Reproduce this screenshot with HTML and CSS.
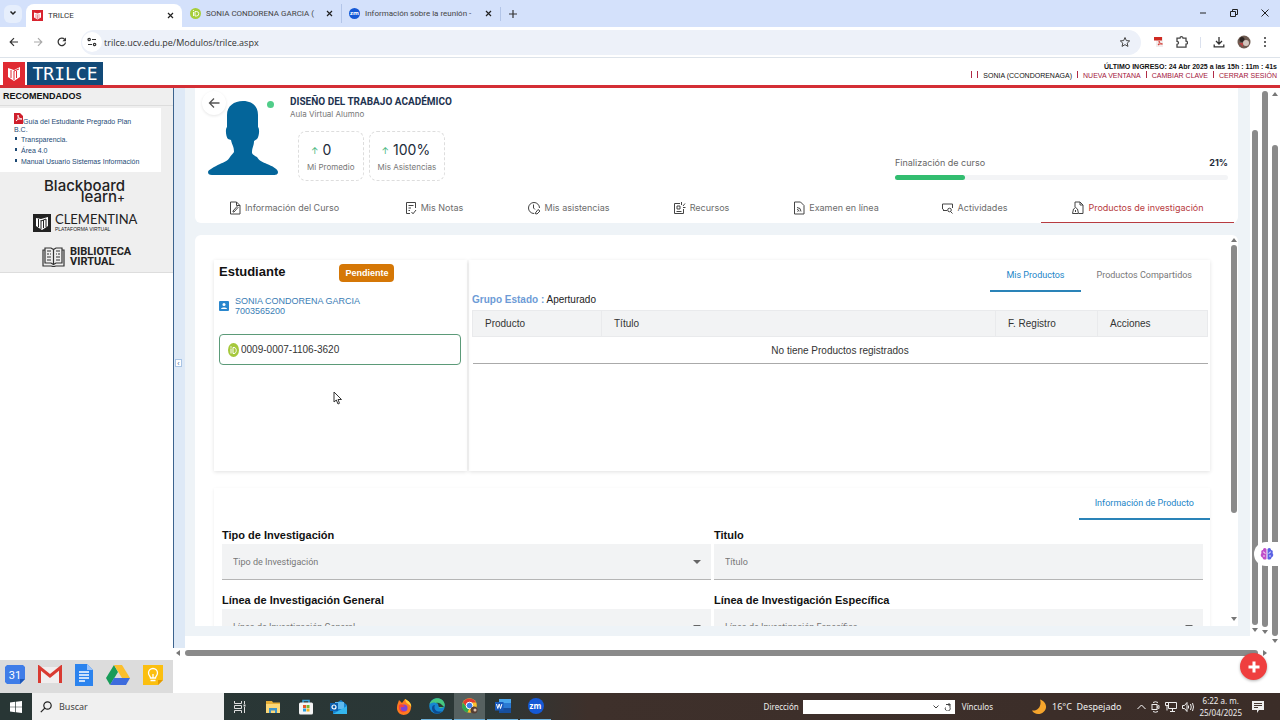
FILE: index.html
```html
<!DOCTYPE html>
<html lang="es">
<head>
  <meta charset="UTF-8">
  <meta name="viewport" content="width=device-width, initial-scale=1.0">
  <title>TRILCE</title>
  <link rel="stylesheet" href="styles.css">
</head>
<body>
  <!-- Pestañas del navegador -->
  <div class="tabstrip">
    <button class="tab-search" aria-label="Buscar pestañas"><svg width="8" height="8" viewBox="0 0 8 8"><path d="M1.500 2.500 4 5l2.500-2.500" fill="none" stroke="#222" stroke-width="1.500"/></svg></button>
    <div class="btab active">
      <svg width="11" height="11" viewBox="0 0 22 22"><rect width="22" height="22" fill="#d8232e"/><path d="M4 5l7 2 7-2v10l-7 4-7-4z" fill="#fff"/><path d="M8 8v9M11 9v9M14 8v9" stroke="#d8232e"/></svg>
      <span class="btab-title">TRILCE</span>
      <button class="close" aria-label="Cerrar"><svg width="7" height="7" viewBox="0 0 7 7"><path d="M1 1l5 5M6 1 1 6" stroke="#222" stroke-width="1.200"/></svg></button>
    </div>
    <div class="btab second">
      <svg width="11" height="11" viewBox="0 0 22 22"><circle cx="11" cy="11" r="11" fill="#a6ce39"/><path d="M7 8v8M10 7v9h3a4.500 4.500 0 0 0 0-9z" fill="none" stroke="#fff" stroke-width="1.800"/><circle cx="7" cy="5" r="1.200" fill="#fff"/></svg>
      <span class="btab-title">SONIA CONDORENA GARCIA (</span>
      <button class="close" aria-label="Cerrar"><svg width="7" height="7" viewBox="0 0 7 7"><path d="M1 1l5 5M6 1 1 6" stroke="#222" stroke-width="1.200"/></svg></button>
    </div>
    <div class="btab third">
      <span class="zm">zm</span>
      <span class="btab-title">Información sobre la reunión -</span>
      <button class="close" aria-label="Cerrar"><svg width="7" height="7" viewBox="0 0 7 7"><path d="M1 1l5 5M6 1 1 6" stroke="#222" stroke-width="1.200"/></svg></button>
    </div>
    <button class="new-tab" aria-label="Nueva pestaña"><svg width="8" height="8" viewBox="0 0 8 8"><path d="M4 0v8M0 4h8" stroke="#333" stroke-width="1.200"/></svg></button>
    <div class="win-buttons">
      <button aria-label="Minimizar"><svg width="8" height="8" viewBox="0 0 8 8"><path d="M1 4h6" stroke="#222"/></svg></button>
      <button aria-label="Restaurar"><svg width="8" height="8" viewBox="0 0 8 8"><path d="M.5 2.500h5v5h-5zM2.500 2V.5h5v5H6" fill="none" stroke="#222"/></svg></button>
      <button aria-label="Cerrar ventana"><svg width="8" height="8" viewBox="0 0 8 8"><path d="M.5.5l7 7m0-7-7 7" stroke="#222"/></svg></button>
    </div>
  </div>

  <div class="toolbar">
    <button aria-label="Atrás"><svg width="10" height="10" viewBox="0 0 10 10"><path d="M9 5H1.500M5 1.200 1.200 5 5 8.800" fill="none" stroke="#333" stroke-width="1.200"/></svg></button>
    <button aria-label="Adelante"><svg width="10" height="10" viewBox="0 0 10 10"><path d="M1 5h7.500M5 1.200 8.800 5 5 8.800" fill="none" stroke="#aaa" stroke-width="1.200"/></svg></button>
    <button aria-label="Recargar"><svg width="10" height="10" viewBox="0 0 10 10"><path d="M8.500 5.500A3.700 3.700 0 1 1 7.600 2.400" fill="none" stroke="#333" stroke-width="1.300"/><path d="M9 .6v3.600H5.400z" fill="#333"/></svg></button>
    <div class="address">
      <span class="site-info"><svg width="10" height="10" viewBox="0 0 10 10" fill="none" stroke="#333" stroke-width="1.200"><circle cx="2.200" cy="2.500" r="1.200"/><path d="M5 2.500h4M1 7.500h4"/><circle cx="7.600" cy="7.500" r="1.200"/></svg></span>
      <input type="text" aria-label="Dirección web" value="trilce.ucv.edu.pe/Modulos/trilce.aspx">
      <svg width="12" height="12" viewBox="0 0 24 24"><path d="M12 3l2.700 6.200 6.700.6-5 4.400 1.500 6.600-5.900-3.500-5.900 3.500 1.500-6.600-5-4.400 6.700-.6z" fill="none" stroke="#444" stroke-width="2"/></svg>
    </div>
    <div class="extensions">
      <svg width="10" height="12" viewBox="0 0 10 12"><path d="M2 1h7v10H2z" fill="#f3eded"/><path d="M0 1h8v3.500H0z" fill="#cf2a22"/><path d="M4 9c2-2 1-4 1-4s1 3 3 3-2-.5-4 1z" fill="none" stroke="#cf2a22" stroke-width=".8"/></svg>
      <svg width="12" height="12" viewBox="0 0 12 12"><path d="M1 2.200h3a1.500 1.500 0 0 1 3 0h3v3a1.500 1.500 0 0 1 0 3v3H1V8.300a1.500 1.500 0 0 0 0-3z" fill="none" stroke="#444" stroke-width="1.300"/></svg>
      <span class="vline"></span>
      <svg width="12" height="12" viewBox="0 0 12 12"><path d="M6 1v6.500M3 5l3 3 3-3M1.200 8.500v2.300h9.600V8.500" fill="none" stroke="#333" stroke-width="1.300"/></svg>
      <svg width="14" height="14" viewBox="0 0 14 14"><circle cx="7" cy="7" r="6.500" fill="#6d5a50"/><circle cx="5" cy="4.500" r="2.500" fill="#2c2523"/><circle cx="9" cy="8" r="3" fill="#d4c5bd"/><path d="M2 8h4v4z" fill="#b44"/></svg>
      <svg width="4" height="12" viewBox="0 0 4 12" fill="#333"><circle cx="2" cy="2" r="1"/><circle cx="2" cy="6" r="1"/><circle cx="2" cy="10" r="1"/></svg>
    </div>
  </div>

  <!-- Cabecera TRILCE -->
  <header class="site-header">
    <div class="brand">
      <svg width="22" height="23" viewBox="0 0 22 23"><rect width="22" height="23" fill="#e02a32"/><path d="M5 6l6 2 6-3v10l-6 4-6-4z" fill="#fff"/><path d="M8 8v8M11 9v9M11 9l5-2M13.500 9v7" stroke="#e02a32"/></svg>
      <span class="brand-name">TRILCE</span>
    </div>
    <div class="session">
      <div class="last-login">ÚLTIMO INGRESO: 24 Abr 2025 a las 15h : 11m : 41s</div>
      <nav class="session-links">
        <i></i><i></i><span>SONIA (CCONDORENAGA)</span>
        <i></i><a href="#">NUEVA VENTANA</a>
        <i></i><a href="#">CAMBIAR CLAVE</a>
        <i></i><a href="#">CERRAR SESIÓN</a>
      </nav>
    </div>
  </header>

  <div class="workspace">
    <aside class="sidebar">
      <div class="side-top">
        <h2>RECOMENDADOS</h2>
        <ul class="side-links">
          <li class="doc"><svg width="9" height="11" viewBox="0 0 9 11"><path d="M0 0h6l3 3v8H0z" fill="#cf1f2c"/><path d="M2 8c3-2 2-5 2-6 0 2 1 4 4 4-3 0-5 0-6 2z" fill="none" stroke="#fff" stroke-width=".9"/></svg><a href="#">Guía del Estudiante Pregrado Plan B.C.</a></li>
          <li><a href="#">Transparencia.</a></li>
          <li><a href="#">Área 4.0</a></li>
          <li><a href="#">Manual Usuario Sistemas Información</a></li>
        </ul>
        <a class="logo blackboard" href="#"><span>Blackboard</span><span>learn<span class="plus">+</span></span></a>
        <a class="logo clementina" href="#">
          <svg width="18" height="18" viewBox="0 0 18 18"><rect width="18" height="18" fill="#222"/><path d="M3 4l5 1 7-2v9l-6 4-6-4z" fill="#fff"/><path d="M5.500 5v8M8 6v9M8 7l5-2v8M10.500 6v8" fill="none" stroke="#222"/></svg>
          <span><b>CLEMENTINA</b><small>PLATAFORMA VIRTUAL</small></span>
        </a>
        <a class="logo biblioteca" href="#">
          <svg width="23" height="20" viewBox="0 0 23 20" fill="none" stroke="#333" stroke-width="1.200"><path d="M3 1h6l2.500 1.500L14 1h6v15h-6l-2.500 1.500L9 16H3zM11.500 3v14M3 3H1v16h8l2.500.6L14 19h8V3h-2"/><path d="M5 4h4M5 7h2M8 7h1M5 10h4M5 13h4M14 4h4M14 7h1M16 7h2M14 10h4M14 13h4"/></svg>
          <span>BIBLIOTECA<br>VIRTUAL</span>
        </a>
      </div>
      <div class="apps">
        <svg width="20" height="20" viewBox="0 0 20 20"><path d="M2 0h16l2 2v12l-5 5H2l-2-2V2z" fill="#3f7de8"/><path d="M15 14h5l-5 5z" fill="#1b56b8"/><text x="10" y="14" text-anchor="middle" class="cal">31</text></svg>
        <svg width="24" height="20" viewBox="0 0 24 20"><path d="M2 2h20v16H2z" fill="#f1eeee"/><path d="M1.500 18V2.500L12 11 22.500 2.500V18" fill="none" stroke="#d93a31" stroke-width="3"/></svg>
        <svg width="18" height="22" viewBox="0 0 18 22"><path d="M0 0h12l6 6v16H0z" fill="#2b83ee"/><path d="M12 0v6h6z" fill="#9cc4fa"/><path d="M4 8h10M4 11h10M4 14h10M4 17h6" stroke="#fff" stroke-width="1.300"/></svg>
        <svg width="24" height="20" viewBox="0 0 24 20"><path d="M8 0 0 13l4 7L12 7z" fill="#169b58"/><path d="M8 0h8l8 13h-8z" fill="#fbbf2d"/><path d="M8 13h16l-4 7H4z" fill="#3d6bdd"/></svg>
        <svg width="20" height="20" viewBox="0 0 20 20"><path d="M0 0h20v15l-5 5H0z" fill="#fbbf10"/><path d="M15 15h5l-5 5z" fill="#e49a00"/><path d="M7.500 13c0-2-2-2.500-2-5a4.500 4.500 0 0 1 9 0c0 2.500-2 3-2 5zM7.500 15.500h5M10 13V9" fill="none" stroke="#fff" stroke-width="1.300"/></svg>
      </div>
    </aside>

    <div class="content">
      <div class="content-top">
        <div class="splitter"><button aria-label="Contraer">‹</button></div>
        <div class="course">
          <section class="course-card">
            <div class="course-info">
              <div class="avatar">
                <svg width="72" height="76" viewBox="0 0 72 76"><path d="M20 16C20 7 27 2 36 2s15 5 15 14v12c2 2 1 10-1 12l-3 2c0 5-2 6-2 12 1 2 3 3 5 4 2 4 6 5 10 7 5 2 11 5 11 8s-3 3-5 3H5c-3 0-4-1-4-3s6-5 12-8c4-2 8-3 10-7 1-2 3-3 4-5 0-6-2-7-3-12l-3-1c-2-2-3-10-1-12z" fill="#04659a"/></svg>
                <span class="online"></span>
                <button class="back" aria-label="Volver"><svg width="12" height="12" viewBox="0 0 12 12"><path d="M11.500 6h-10M6 1.500 1.500 6 6 10.500" fill="none" stroke="#555" stroke-width="1.300"/></svg></button>
              </div>
              <div class="course-text">
                <h1>DISEÑO DEL TRABAJO ACADÉMICO</h1>
                <p>Aula Virtual Alumno</p>
                <div class="stats">
                  <div class="stat"><strong><i>↑</i>0</strong><span>Mi Promedio</span></div>
                  <div class="stat"><strong><i>↑</i>100%</strong><span>Mis Asistencias</span></div>
                </div>
              </div>
              <div class="progress">
                <div class="progress-text"><span>Finalización de curso</span><b>21%</b></div>
                <div class="bar"><div style="width: 21%"></div></div>
              </div>
            </div>
            <nav class="course-tabs">
              <a href="#"><svg width="12" height="14" viewBox="0 0 12 14"><path d="M1.500 1h6L11 4.500V13H1.500zM7.500 1v3.500H11M4 10l4-4.500 1 1L5 11H4z"/></svg>Información del Curso</a>
              <a href="#"><svg width="12" height="14" viewBox="0 0 12 14"><path d="M10.500 7V1.500h-9v11H5M3.500 4.500h5M3.500 7h2.500M3.500 9.500H5M6.500 11l1.500 1.800L11 9"/></svg>Mis Notas</a>
              <a href="#"><svg width="14" height="14" viewBox="0 0 14 14"><path d="M7 12.500A5.500 5.500 0 1 1 12.500 7M6.500 3.500V7l1.500 1.500M8 12.500l3-4 2 1.500-3 3z"/></svg>Mis asistencias</a>
              <a href="#"><svg width="13" height="14" viewBox="0 0 13 14"><path d="M7 2.500H1.500v10h9V8M4 5h3v3H4zM3.500 10.500h5M8.500 4V1M10 5l2-2.500M10 6.500h2.500"/></svg>Recursos</a>
              <a href="#"><svg width="12" height="14" viewBox="0 0 12 14"><path d="M1.500 1h6L11 4.500V13H1.500zM4 6.500a4 4 0 0 1 4 4M4 8.500a2 2 0 0 1 2 2M4 10.500h.5"/></svg>Examen en línea</a>
              <a href="#"><svg width="13" height="12" viewBox="0 0 13 12"><path d="M6 8.500H3.500L1.500 7V2h10v4M11.500 11.500l-2-2M2 8.500h4"/><circle cx="8.500" cy="8" r="1.800"/></svg>Actividades</a>
              <a href="#" class="current"><svg width="13" height="14" viewBox="0 0 13 14"><path d="M4 6V1h5l3 3v8.500H8M9 1v3h3M1.500 12.500l1-4.500 2-1.500 2 1.500 1 4.500zM4.500 9v2"/></svg>Productos de investigación</a>
            </nav>
          </section>

          <section class="products">
            <div class="products-scroll">
              <div class="panels">
                <div class="student">
                  <div class="student-head"><h3>Estudiante</h3><span class="badge">Pendiente</span></div>
                  <div class="person">
                    <svg width="10" height="10" viewBox="0 0 10 10"><rect width="10" height="10" rx="1" fill="#2a87cd"/><circle cx="5" cy="3.500" r="1.500" fill="#fff"/><path d="M2 8c0-2 6-2 6 0z" fill="#fff"/></svg>
                    <a href="#">SONIA CONDORENA GARCIA<br>7003565200</a>
                  </div>
                  <div class="orcid">
                    <svg width="11" height="14" viewBox="0 0 11 14"><ellipse cx="5.500" cy="7" rx="5.500" ry="7" fill="#a6c83c"/><path d="M3 5.500v5M5 4.500v6h1c3 0 3-6 0-6z" fill="none" stroke="#fff"/><circle cx="3" cy="4" r=".7" fill="#fff"/></svg>
                    <input type="text" aria-label="ORCID" value="0009-0007-1106-3620">
                  </div>
                </div>
                <div class="list">
                  <div class="mat-tabs">
                    <button class="selected">Mis Productos</button>
                    <button>Productos Compartidos</button>
                  </div>
                  <p class="group"><b>Grupo Estado :</b> Aperturado</p>
                  <table>
                    <thead>
                      <tr><th class="c-prod">Producto</th><th>Título</th><th class="c-date">F. Registro</th><th class="c-act">Acciones</th></tr>
                    </thead>
                    <tbody>
                      <tr><td colspan="4">No tiene Productos registrados</td></tr>
                    </tbody>
                  </table>
                </div>
              </div>

              <div class="info-box">
                <div class="mat-tabs">
                  <button class="selected">Información de Producto</button>
                </div>
                <form class="product-form">
                  <div class="field">
                    <label for="tipo">Tipo de Investigación</label>
                    <select id="tipo"><option>Tipo de Investigación</option></select>
                  </div>
                  <div class="field">
                    <label for="titulo">Titulo</label>
                    <input type="text" id="titulo" placeholder="Título">
                  </div>
                  <div class="field">
                    <label for="general">Línea de Investigación General</label>
                    <select id="general"><option>Línea de Investigación General</option></select>
                  </div>
                  <div class="field">
                    <label for="especifica">Línea de Investigación Específica</label>
                    <select id="especifica"><option>Línea de Investigación Específica</option></select>
                  </div>
                </form>
              </div>
            </div>
            <div class="vscroll inner"><i class="up"></i><span class="thumb"></span><i class="down"></i></div>
          </section>
        </div>
        <div class="vscroll first"><span class="thumb"></span><i class="down"></i></div>
        <div class="vscroll second-bar"><span class="thumb"></span><i class="down"></i></div>
        <div class="vscroll third-bar"><i class="up"></i><span class="thumb"></span><i class="down"></i></div>
      </div>
      <div class="hscroll"><i class="left"></i><span class="thumb"></span><i class="right"></i></div>
    </div>

    <svg class="cursor" width="10" height="14" viewBox="0 0 10 14"><path d="M1 1v10l2.300-2 1.700 4 1.500-.7L5 8.500h3.500z" fill="#fff" stroke="#333"/></svg>
    <button class="assistant" aria-label="Asistente"><svg width="14" height="14" viewBox="0 0 14 14"><path d="M6.500 2C5 0 3 1 3 3 1 3 1 5 1.500 6 0 8 1 10 2.500 10.500 3 13 5.500 13 6.500 12z" fill="#c04fc8"/><path d="M7.500 2C9 0 11 1 11 3c2 0 2 2 1.500 3 1.500 2 .5 4-1 4.500C11 13 8.500 13 7.500 12z" fill="#5b62e4"/><path d="M3 5c2 0 2 1 2 2M3 9h2M11 5c-2 0-2 1-2 2M11 9H9" fill="none" stroke="#fff" stroke-width=".8"/></svg></button>
    <button class="fab" aria-label="Agregar"><svg width="12" height="12" viewBox="0 0 12 12"><path d="M6 .5v11M.5 6h11" stroke="#fff" stroke-width="3"/></svg></button>
  </div>

  <!-- Barra de tareas -->
  <footer class="taskbar">
    <button class="start" aria-label="Inicio"><svg width="12" height="12" viewBox="0 0 12 12" fill="#fff"><path d="M0 1.500 5.300.8v4.900H0zM6 .7 12 0v5.700H6zM0 6.300h5.300v4.900L0 10.500zM6 6.300h6V12l-6-.7z"/></svg></button>
    <label class="search"><svg width="12" height="12" viewBox="0 0 12 12" fill="none" stroke="#222" stroke-width="1.200"><circle cx="7.500" cy="4.500" r="3.700"/><path d="M4.800 7.200.8 11.200"/></svg><input type="text" aria-label="Buscar" placeholder="Buscar"></label>
    <div class="task-apps">
      <button aria-label="Vista de tareas"><svg width="12" height="12" viewBox="0 0 12 12" fill="none" stroke="#ddd"><path d="M.5 0v2.500h7V0M.5 4.500h7v3h-7zM.5 12V9.500h7V12M10.500 0v3M10.500 6v6"/><path d="M9.500 4.500h2" stroke-width="2"/></svg></button>
      <button aria-label="Explorador"><svg width="16" height="14" viewBox="0 0 16 14"><path d="M1 1h6l1 1.500h7V13H1z" fill="#e6ad36"/><path d="M1 4h14v9H1z" fill="#fbd777"/><path d="M4 13V8h8v5h-2v-2.500H6V13z" fill="#3f94c9"/></svg></button>
      <button aria-label="Store"><svg width="16" height="16" viewBox="0 0 16 16"><path d="M5 4V1.500h6V4" fill="none" stroke="#3ba5dc" stroke-width="1.500"/><rect x="1" y="3.500" width="14" height="12" rx="1.500" fill="#f4f4f4"/><path d="M5 6h3v3H5z" fill="#e4572c"/><path d="M8.500 6h3v3h-3z" fill="#77b52f"/><path d="M5 9.500h3v3H5z" fill="#279fe0"/><path d="M8.500 9.500h3v3h-3z" fill="#f4b41f"/></svg></button>
      <button aria-label="Outlook"><svg width="17" height="16" viewBox="0 0 17 16"><path d="M3 6 11 1l6 5v9H3z" fill="#1683cf"/><path d="M5 3h9v7H5z" fill="#5fb9ee"/><path d="M3 15l14-8v8z" fill="#35b7ef"/><path d="M0 4h8v8H0z" fill="#0c5fae"/><circle cx="4" cy="8" r="2" fill="none" stroke="#fff" stroke-width="1.200"/></svg></button>
      <button class="gap" aria-label="Firefox"><svg width="16" height="16" viewBox="0 0 16 16"><path d="M2 4l1-3 3 3 3-4c4 2 7 5 6 9-1 9-13 9-14 1 0-2 0-4 1-6z" fill="#ff7a1f"/><path d="M9 0c4 2 7 5 6 8-1-3-4-3-5-5S9 0 9 0z" fill="#ffd13a"/><circle cx="8" cy="9" r="3.500" fill="#7b45d8"/><path d="M3 6c3-2 4 1 7 1-2 0-3 2-6 1 0 3 3 5 6 4-4 3-8 0-7-6z" fill="#f5413f"/></svg></button>
      <button class="open" aria-label="Edge"><svg width="16" height="16" viewBox="0 0 16 16"><circle cx="8" cy="8" r="7.800" fill="#1687d0"/><path d="M.4 7C2-2 15-2 15.800 7c0 3-5 4-6 2 1-1 0-4-3-4C4 4 1 5 .4 7z" fill="#46c980"/><path d="M6 7c-2 4 2 8 7 6-4 5-10 2-10-3 0-2 1-3 3-3z" fill="#0c4c94"/><path d="M10 9c-1-1 0-4-3-4 2-1 5 0 8 4z" fill="#2b3736"/></svg></button>
      <button class="open focus" aria-label="Chrome"><svg width="16" height="16" viewBox="0 0 16 16"><circle cx="7.500" cy="7.500" r="7.300" fill="#fbc02d"/><path d="M1 4.500A7.300 7.300 0 0 1 14 4.500H7.500L4.500 9z" fill="#e23c32"/><path d="M1 4.500 5 10l2 1-1.500 3.600C0 13-1 8 1 4.500z" fill="#30a552"/><circle cx="7.500" cy="7.500" r="3.300" fill="#3d7de8" stroke="#fff"/><circle cx="12" cy="12" r="3.500" fill="#563e35"/><circle cx="13" cy="12" r="1.500" fill="#dfc4b2"/></svg></button>
      <button class="open" aria-label="Word"><svg width="16" height="14" viewBox="0 0 16 14"><path d="M4 0h12v14H4z" fill="#2a7ad3"/><path d="M4 0h12v4H4z" fill="#49a7ed"/><path d="M4 9h12v5H4z" fill="#174f9d"/><path d="M0 3h8.500v8.500H0z" fill="#185abd"/><path d="M1.500 5l1.300 4.500L4.200 5l1.300 4.500L6.900 5" fill="none" stroke="#fff"/></svg></button>
      <button class="open" aria-label="Zoom"><span class="zm big">zm</span></button>
    </div>
    <div class="tray">
      <label class="direccion">Dirección <span class="combo"><input type="text"><svg width="6" height="4" viewBox="0 0 6 4"><path d="M.5.5 3 3 5.500.5" fill="none" stroke="#444"/></svg><svg width="8" height="8" viewBox="0 0 8 8"><path d="M2 1.500H6v3a2.500 2.500 0 1 1-4.500 0M4.500 0 6 1.500 4.500 3" fill="none" stroke="#444"/></svg></span></label>
      <span class="vinculos">Vínculos</span>
      <svg width="16" height="16" viewBox="0 0 16 16"><path d="M9 .5c6 2 8 8 4 12s-10 3-12-1c6 1 10-5 8-11z" fill="#f6a52c"/></svg>
      <span class="weather">16°C&nbsp; Despejado</span>
      <div class="tray-icons">
        <svg width="9" height="6" viewBox="0 0 9 6"><path d="M.5 5l4-4 4 4" fill="none" stroke="#fff"/></svg>
        <svg width="9" height="12" viewBox="0 0 9 12" fill="none" stroke="#eee"><rect x="1" y="3.500" width="5" height="5"/><path d="M6 5.500l2-1v3l-2-1M2 1.500q2.500-1.500 5 0M2 10.500q2.500 1.500 5 0"/></svg>
        <svg width="12" height="11" viewBox="0 0 12 11" fill="none" stroke="#eee"><path d="M3.500 1.500h8v6h-8zM.5 1.500h3v3h-3zM2 5v4.500M5 10.500h5M7.500 8v2"/></svg>
        <svg width="12" height="10" viewBox="0 0 12 10" fill="none" stroke="#eee"><path d="M.5 3.500h2l2.500-3v9l-2.500-3h-2zM6.500 3.500v3M8.500 2q1.500 3 0 6M10.500 1q2 4 0 8"/></svg>
      </div>
      <div class="clock">6:22 a. m.<br>25/04/2025</div>
      <svg width="12" height="12" viewBox="0 0 12 12"><path d="M0 0h12v9H7l-2 3V9H0z" fill="#eee"/><path d="M2 2.500h8M2 4.500h8M2 6.500h4" stroke="#443630"/></svg>
    </div>
  </footer>
</body>
</html>
```
FILE: styles.css
```css
* {
  box-sizing: border-box;
}

body {
  margin: 0;
  height: 100vh;
  display: flex;
  flex-direction: column;
  overflow: hidden;
  background: #fff;
  font-family: "Liberation Sans", Arial, sans-serif;
  font-size: 10px;
  color: #333;
}

button {
  font: inherit;
  border: none;
  background: none;
  padding: 0;
  cursor: pointer;
}

input, select {
  font: inherit;
  color: inherit;
  border: none;
  background: none;
  outline: none;
  padding: 0;
  min-width: 0;
}

a {
  text-decoration: none;
}

svg {
  flex: none;
}

h1, h2, h3, p, ul {
  margin: 0;
  padding: 0;
}

/* navegador */
.tabstrip {
  display: flex;
  align-items: center;
  height: 27px;
  background: #d4e1fb;
  font-family: Roboto, sans-serif;
  font-size: 8px;
}

.tab-search {
  width: 18px;
  height: 18px;
  margin: 0 4px;
  border-radius: 6px;
  background: #e6eefc;
}

.btab {
  display: flex;
  align-items: center;
  gap: 5px;
  height: 19px;
  color: #444;
}

.btab.active {
  width: 156px;
  height: 23px;
  align-self: flex-end;
  padding: 0 6px;
  background: #fff;
  border-radius: 8px 8px 0 0;
  color: #333;
}

.btab.second {
  width: 160px;
  padding: 0 6px 0 8px;
  border-right: 1px solid #b3c5e8;
}

.btab.third {
  width: 158px;
  padding: 0 6px 0 7px;
}

.btab-title {
  flex: 1;
  white-space: nowrap;
}

.close {
  width: 12px;
  line-height: 0;
}

.zm {
  flex: none;
  width: 11px;
  height: 11px;
  border-radius: 50%;
  background: #1559d6;
  color: #fff;
  font: bold 6px/10px "Open Sans", sans-serif;
  text-align: center;
}

.new-tab {
  padding: 0 8px;
  height: 14px;
  border-left: 1px solid #b3c5e8;
  line-height: 0;
}

.win-buttons {
  display: flex;
  gap: 23px;
  margin-left: auto;
  margin-right: 11px;
}

.toolbar {
  display: flex;
  align-items: center;
  height: 31px;
  padding-left: 9px;
  border-bottom: 1px solid #dde3ea;
  background: #fff;
}

.toolbar > button {
  width: 10px;
  height: 10px;
  line-height: 0;
  margin-right: 14px;
}

.address {
  flex: 1;
  display: flex;
  align-items: center;
  gap: 2px;
  height: 25px;
  padding: 0 10px 0 1px;
  background: #edf1f9;
  border-radius: 13px;
}

.site-info {
  display: flex;
  padding: 5px;
  border-radius: 50%;
  background: #fff;
}

.address input {
  flex: 1;
  font-family: "Open Sans", sans-serif;
  font-size: 9px;
}

.extensions {
  display: flex;
  align-items: center;
  gap: 12px;
  padding: 0 13px 0 13px;
}

.vline {
  width: 1px;
  height: 11px;
  background: #dbe1ee;
}

/* cabecera */
.site-header {
  display: flex;
  justify-content: space-between;
  align-items: flex-end;
  height: 30px;
  padding: 0 3px;
  border-bottom: 3px solid #d42e35;
}

.brand {
  display: flex;
  gap: 2px;
}

.brand-name {
  width: 76px;
  height: 23px;
  background: #124a78;
  color: #fff;
  font-family: "DejaVu Sans Mono", monospace;
  font-size: 18px;
  line-height: 23px;
  text-align: center;
}

.session {
  text-align: right;
  font-size: 7px;
  line-height: 9px;
  color: #111;
  padding-bottom: 5px;
}

.last-login {
  font-weight: bold;
}

.session-links {
  display: flex;
  justify-content: flex-end;
  gap: 5px;
}

.session-links i {
  width: 1px;
  height: 7px;
  background: #b02a45;
}

.session-links a {
  color: #a3153a;
}

.workspace {
  flex: 1;
  min-height: 0;
  display: flex;
  position: relative;
}

/* columna izquierda */
.sidebar {
  width: 173px;
  display: flex;
  flex-direction: column;
  justify-content: space-between;
}

.side-top {
  background: #efefef;
  border-bottom: 1px solid #ddd;
  padding-bottom: 5px;
}

.sidebar h2 {
  padding-left: 3px;
  font-size: 9px;
  line-height: 17px;
  color: #111;
  border-bottom: 1px solid #ddd;
}

.side-links {
  list-style: none;
  width: 161px;
  margin-top: 2px;
  padding: 5px 10px 5px 14px;
  background: #fff;
  font-size: 7px;
}

.side-links a {
  color: #1d4a75;
}

.side-links li {
  height: 11px;
  line-height: 11px;
  padding-left: 7px;
  background: linear-gradient(#1d4a75, #1d4a75) 1px 3px / 2px 3px no-repeat;
}

.side-links .doc {
  height: 21px;
  line-height: 8px;
  padding: 0 10px 0 0;
  background: none;
}

.logo {
  display: flex;
  align-items: center;
  color: #222;
}

.blackboard {
  flex-direction: column;
  align-items: flex-end;
  margin: 8px 48px 0 0;
  font: 500 15px/11px Inter, sans-serif;
}

.plus {
  font-size: 12px;
}

.clementina {
  gap: 4px;
  margin: 10px 0 0 33px;
}

.clementina span {
  display: flex;
  flex-direction: column;
}

.clementina b {
  font: 13px/13px Lato, sans-serif;
}

.clementina small {
  font-size: 5px;
  line-height: 6px;
}

.biblioteca {
  gap: 5px;
  margin: 15px 0 0 42px;
  font: bold 11px/10px Roboto, sans-serif;
}

.apps {
  display: flex;
  align-items: center;
  justify-content: space-between;
  height: 33px;
  padding: 0 10px 4px 5px;
  background: #dcdcdc;
}

.cal {
  font: 11px Roboto, sans-serif;
  fill: #fff;
}

/* contenido */
.content {
  flex: 1;
  min-width: 0;
  display: flex;
  flex-direction: column;
  padding-bottom: 36px;
}

.content-top {
  flex: 1;
  min-height: 0;
  display: flex;
}

.splitter {
  width: 12px;
  border-left: 1px solid #3c638e;
  background: #dee9f6;
  display: flex;
  align-items: center;
}

.splitter button {
  width: 7px;
  height: 8px;
  margin: 0 0 10px 1px;
  border: 1px solid #a9c4e4;
  background: #fff;
  font-size: 7px;
  line-height: 5px;
  color: #369;
}

.course {
  flex: 1;
  min-width: 0;
  display: flex;
  flex-direction: column;
  gap: 12px;
  margin-bottom: 12px;
  padding: 0 12px 10px 10px;
  background: #eef3f7;
}

.course-card {
  background: #fff;
  border-radius: 0 0 6px 6px;
  padding: 0 4px;
  font-family: Inter, sans-serif;
}

.course-info {
  display: flex;
  height: 104px;
  padding: 8px 6px 0 8px;
}

.avatar {
  position: relative;
  width: 83px;
  padding-top: 3px;
}

.online {
  position: absolute;
  left: 60px;
  top: 5px;
  width: 7px;
  height: 7px;
  border-radius: 50%;
  background: #50cd89;
}

.back {
  position: absolute;
  left: -5px;
  top: -5px;
  width: 24px;
  height: 24px;
  border-radius: 50%;
  background: #fff;
  box-shadow: 0 1px 3px rgba(0, 0, 0, 0.1);
  line-height: 0;
}

.course-text {
  flex: 1;
}

.course-text h1 {
  font-family: Roboto, sans-serif;
  font-size: 10px;
  line-height: 12px;
  color: #1e3350;
}

.course-text p {
  font-size: 8px;
  line-height: 12px;
  color: #777;
}

.stats {
  display: flex;
  gap: 5px;
  margin: 11px 0 0 8px;
}

.stat {
  height: 50px;
  padding: 9px 8px;
  border: 1px dashed #ddd;
  border-radius: 8px;
}

.stat strong {
  display: block;
  padding-left: 4px;
  font-size: 14px;
  font-weight: normal;
  line-height: 18px;
  color: #222b3a;
}

.stat i {
  margin-right: 4px;
  font-size: 9px;
  font-style: normal;
  color: #3fb47a;
  vertical-align: 1px;
}

.stat span {
  font-size: 8px;
  line-height: 12px;
  color: #777;
}

.progress {
  width: 333px;
  padding-top: 61px;
}

.progress-text {
  display: flex;
  justify-content: space-between;
  font-size: 9px;
  line-height: 12px;
  color: #666;
}

.progress-text b {
  color: #222b3a;
}

.bar {
  height: 5px;
  margin-top: 6px;
  background: #f3f4f6;
  border-radius: 3px;
}

.bar div {
  height: 5px;
  background: #32bd70;
  border-radius: 3px;
}

.course-tabs {
  display: grid;
  grid-template-columns: 170fr 130fr 138fr 128fr 142fr 134fr 193fr;
  height: 31px;
}

.course-tabs a {
  display: flex;
  align-items: center;
  justify-content: center;
  gap: 4px;
  font-size: 9px;
  color: #6c6c6c;
  white-space: nowrap;
}

.course-tabs svg {
  fill: none;
  stroke: #444;
}

.course-tabs .current {
  color: #b73b40;
  border-bottom: 1px solid #b73b40;
  padding-top: 1px;
}

.products {
  flex: 1;
  min-height: 0;
  display: flex;
  background: #fff;
  border-radius: 6px 6px 0 0;
}

.products-scroll {
  flex: 1;
  min-width: 0;
  overflow: hidden;
  padding: 25px 20px 0 19px;
}

.panels {
  display: grid;
  grid-template-columns: 253fr 741fr;
  gap: 2px;
  height: 211px;
}

.student, .list {
  box-shadow: 0 1px 4px rgba(0, 0, 0, 0.12);
  min-width: 0;
}

.student {
  padding: 4px 6px 0 5px;
}

.student-head {
  display: flex;
  gap: 54px;
}

.student h3 {
  font-size: 13px;
  line-height: 16px;
  color: #111;
}

.badge {
  height: 18px;
  padding: 0 6px;
  background: #d57706;
  border-radius: 4px;
  color: #fff;
  font-size: 9px;
  font-weight: bold;
  line-height: 18px;
}

.person {
  display: flex;
  align-items: center;
  gap: 6px;
  margin-top: 14px;
  font-size: 9px;
  line-height: 10px;
}

.person a {
  color: #3a7db5;
}

.orcid {
  display: flex;
  align-items: center;
  gap: 2px;
  height: 31px;
  margin-top: 18px;
  padding-left: 8px;
  border: 1px solid #5b9a78;
  border-radius: 4px;
}

.orcid input {
  flex: 1;
}

.list {
  padding: 0 2px 0 3px;
}

.mat-tabs {
  display: flex;
  justify-content: flex-end;
}

.mat-tabs button {
  height: 32px;
  padding: 0 16px;
  border-bottom: 2px solid transparent;
  color: #777;
  font-family: Roboto, sans-serif;
  font-size: 9px;
}

.mat-tabs .selected {
  color: #2285c7;
  border-bottom-color: #2a83b8;
}

.group {
  margin-top: 2px;
  line-height: 12px;
  color: #222;
}

.group b {
  color: #6d9bd6;
}

table {
  width: 100%;
  margin-top: 4px;
  border-collapse: collapse;
  table-layout: fixed;
}

th {
  height: 26px;
  padding: 0 12px;
  background: #f2f3f4;
  border: 1px solid #e9eaec;
  font-weight: normal;
  text-align: left;
}

.c-prod {
  width: 129px;
}

.c-date {
  width: 102px;
}

.c-act {
  width: 110px;
}

td {
  height: 27px;
  padding: 0;
  border-bottom: 1px solid #aaa;
  text-align: center;
}

.info-box {
  margin-top: 17px;
  padding-bottom: 40px;
  box-shadow: 0 1px 3px rgba(0, 0, 0, 0.08);
}

.info-box .mat-tabs {
  padding-bottom: 7px;
}

.product-form {
  display: grid;
  grid-template-columns: 1fr 1fr;
  column-gap: 3px;
  row-gap: 12px;
  padding: 0 7px 0 8px;
}

.field {
  display: flex;
  flex-direction: column;
}

.field label {
  font-size: 11px;
  font-weight: bold;
  line-height: 17px;
  color: #111;
}

.field select, .field input {
  height: 36px;
  padding: 0 11px;
  background-color: #f2f3f4;
  border-bottom: 1px solid #b5b5b5;
  color: #777;
  font-family: Roboto, sans-serif;
  font-size: 9px;
  appearance: none;
}

.field select {
  background-image: url("data:image/svg+xml,%3Csvg xmlns='http://www.w3.org/2000/svg' width='8' height='4'%3E%3Cpath d='M0 0h8L4 4z' fill='%23666'/%3E%3C/svg%3E");
  background-repeat: no-repeat;
  background-position: right 10px center;
}

.field input::placeholder {
  color: #777;
}

/* barras de desplazamiento */
.vscroll {
  width: 10px;
  display: flex;
  flex-direction: column;
  align-items: center;
  gap: 3px;
}

.thumb {
  flex: 1;
  width: 6px;
  background: #8a8a8a;
  border-radius: 3px;
}

.vscroll i, .hscroll i {
  border: 3px solid transparent;
}

.vscroll .up {
  border-top: none;
  border-bottom: 4px solid #777;
}

.vscroll .down {
  border-bottom: none;
  border-top: 4px solid #777;
}

.inner {
  width: 8px;
  padding: 3px 0 5px;
}

.inner .thumb {
  flex: 0 1 268px;
}

.inner .down {
  margin-top: auto;
}

.first {
  padding: 42px 0 16px;
}

.second-bar {
  padding: 3px 0 14px;
}

.third-bar {
  padding: 4px 0 5px;
}

.third-bar .thumb {
  margin-top: 46px;
}

.hscroll {
  display: flex;
  align-items: center;
  gap: 5px;
  height: 9px;
  padding: 0 13px 0 3px;
}

.hscroll .thumb {
  height: 6px;
}

.hscroll .left {
  border-left: none;
  border-right: 4px solid #777;
}

.hscroll .right {
  border-right: none;
  border-left: 4px solid #777;
}

/* elementos flotantes */
.cursor {
  position: absolute;
  left: 333px;
  top: 303px;
}

.assistant {
  position: absolute;
  right: 0;
  bottom: 127px;
  width: 26px;
  height: 24px;
  border-radius: 12px 0 0 12px;
  background: #fff;
  line-height: 0;
}

.fab {
  position: absolute;
  right: 13px;
  bottom: 13px;
  width: 27px;
  height: 27px;
  border-radius: 50%;
  background: #ef3f3f;
  box-shadow: 0 1px 3px rgba(0, 0, 0, 0.3);
  line-height: 0;
}

/* barra de tareas */
.taskbar {
  display: flex;
  height: 27px;
  background: linear-gradient(90deg, #283635 0%, #2b3736 38%, #3e302b 46%, #3b2d28 100%);
  color: #eee;
  font-family: "Noto Sans", sans-serif;
}

.start {
  width: 32px;
  line-height: 0;
}

.search {
  width: 192px;
  display: flex;
  align-items: center;
  gap: 7px;
  padding-left: 8px;
  background: #f0f0f0;
  font-size: 9px;
}

.search input::placeholder {
  color: #444;
}

.task-apps {
  display: flex;
}

.task-apps button {
  display: flex;
  align-items: center;
  justify-content: center;
  width: 31px;
  margin-right: 2px;
}

.task-apps .gap {
  margin-left: 32px;
}

.task-apps .open {
  border-bottom: 1px solid #6fb3dd;
}

.task-apps .focus {
  background: #566160;
}

.big {
  width: 16px;
  height: 16px;
  font-size: 8px;
  line-height: 15px;
}

.tray {
  display: flex;
  align-items: center;
  margin-left: auto;
  padding-right: 16px;
  white-space: nowrap;
}

.direccion {
  display: flex;
  align-items: center;
  gap: 4px;
  font-size: 8px;
}

.combo {
  display: flex;
  align-items: center;
  gap: 5px;
  width: 152px;
  height: 14px;
  padding-right: 3px;
  background: #fff;
  color: #333;
}

.combo input {
  flex: 1;
}

.vinculos {
  margin: 0 38px 0 7px;
  font-size: 8px;
}

.weather {
  margin: 0 16px 0 5px;
  font-size: 9px;
}

.tray-icons {
  display: flex;
  align-items: center;
  gap: 5px;
  margin-right: 5px;
}

.clock {
  margin-right: 10px;
  font-size: 8px;
  line-height: 12px;
  text-align: center;
}
```
